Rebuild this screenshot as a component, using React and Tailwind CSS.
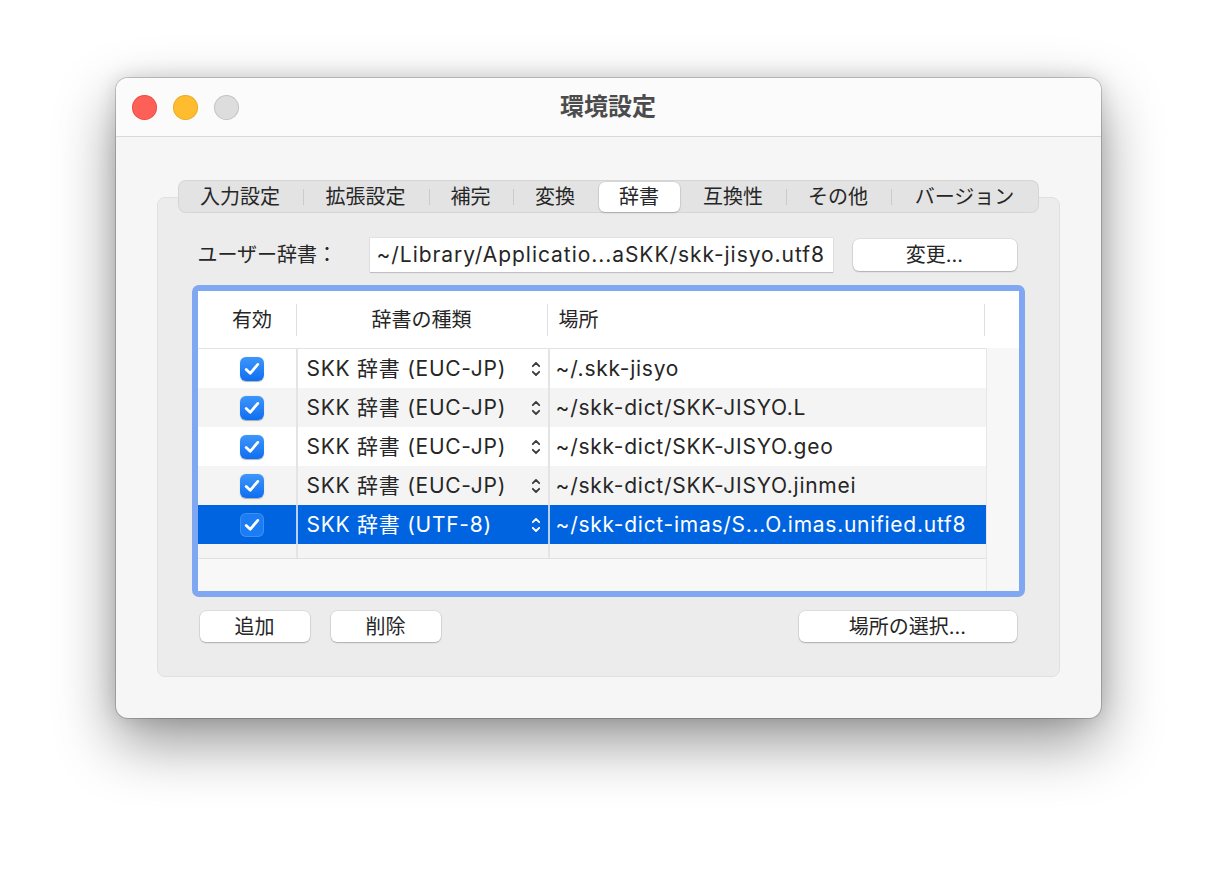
import React from 'react';

const font = { fontFamily: 'Inter, "Noto Sans CJK JP", sans-serif' };

const tabs = [
  { label: '入力設定', w: 'w-[125px]' },
  { label: '拡張設定', w: 'w-[126px]' },
  { label: '補完', w: 'w-[84px]' },
  { label: '変換', w: 'w-[85px]' },
  { label: '辞書', w: 'w-[83px]', active: true },
  { label: '互換性', w: 'w-[105px]' },
  { label: 'その他', w: 'w-[105px]' },
  { label: 'バージョン', w: 'w-[148px]' },
];

const rows = [
  { type: 'SKK 辞書 (EUC-JP)', path: '~/.skk-jisyo' },
  { type: 'SKK 辞書 (EUC-JP)', path: '~/skk-dict/SKK-JISYO.L' },
  { type: 'SKK 辞書 (EUC-JP)', path: '~/skk-dict/SKK-JISYO.geo' },
  { type: 'SKK 辞書 (EUC-JP)', path: '~/skk-dict/SKK-JISYO.jinmei' },
  { type: 'SKK 辞書 (UTF-8)', path: '~/skk-dict-imas/S...O.imas.unified.utf8', selected: true },
];

const Checkbox = ({ selected }) => (
  <div
    className={`w-[24px] h-[24px] rounded-[6px] flex items-center justify-center ${
      selected
        ? 'bg-[#1b7cf3] shadow-[inset_0_0_0_1px_rgba(255,255,255,0.15)]'
        : 'bg-gradient-to-b from-[#3d96fb] to-[#0b6ef0] shadow-[0_0.5px_1px_rgba(0,0,0,0.3)]'
    }`}
  >
    <svg width="16" height="14" viewBox="0 0 16 14" fill="none">
      <path d="M2.2 7.4 L6.2 11.3 L13.8 2.4" stroke="white" strokeWidth="2.8" strokeLinecap="round" strokeLinejoin="round" />
    </svg>
  </div>
);

const Stepper = ({ selected }) => (
  <svg width="10" height="18" viewBox="0 0 10 18" fill="none">
    <path d="M1.8 6.2 L5 3 L8.2 6.2 M1.8 11.8 L5 15 L8.2 11.8" stroke={selected ? 'white' : '#3a3a3a'} strokeWidth="1.8" strokeLinecap="round" strokeLinejoin="round" />
  </svg>
);

const Button = ({ children, className }) => (
  <button className={`h-[31px] bg-white rounded-[6px] text-[20px] text-[#262626] shadow-[0_0_0_0.5px_rgba(0,0,0,0.12),0_1px_1.5px_rgba(0,0,0,0.22)] flex items-center justify-center ${className}`}>
    {children}
  </button>
);

export default function App() {
  return (
    <div className="w-full h-[871px] bg-white flex justify-center pt-[78px]" style={font}>
      <div className="w-[985px] h-[640px] rounded-[12px] overflow-hidden bg-[#f6f6f6] shadow-[0_0_0_1px_rgba(0,0,0,0.18),0_24px_60px_rgba(0,0,0,0.42),0_0_20px_rgba(0,0,0,0.14)] flex flex-col">
        {/* title bar */}
        <div className="h-[59px] shrink-0 bg-[#fbfbfb] border-b border-[#d9d9d9] flex items-center relative">
          <div className="flex gap-[16px] pl-[16px]">
            <div className="w-[25px] h-[25px] rounded-full bg-[#fe5f57] shadow-[inset_0_0_0_1px_rgba(200,50,40,0.35)]" />
            <div className="w-[25px] h-[25px] rounded-full bg-[#febc2e] shadow-[inset_0_0_0_1px_rgba(200,140,20,0.35)]" />
            <div className="w-[25px] h-[25px] rounded-full bg-[#dddddd] shadow-[inset_0_0_0_1px_rgba(0,0,0,0.12)]" />
          </div>
          <div className="absolute inset-0 flex items-center justify-center text-[24px] font-bold text-[#4c4c4c] pointer-events-none">
            環境設定
          </div>
        </div>

        {/* content */}
        <div className="px-[41px] pt-[43px] flex flex-col items-center">
          <div className="relative z-10 h-[33px] w-[861px] rounded-[8px] bg-[#e3e3e3] shadow-[inset_0_0_0_1px_rgba(0,0,0,0.06)] flex items-center text-[20px] text-[#262626]">
            {tabs.map((t, i) => {
              const prevActive = i > 0 && tabs[i - 1].active;
              const showSep = i > 0 && !t.active && !prevActive;
              return (
                <div key={t.label} className={`${t.w} h-full relative flex items-center justify-center pt-[1px]`}>
                  {showSep && <div className="absolute left-0 top-[9px] w-px h-[16px] bg-[#cbcbcb]" />}
                  {t.active ? (
                    <div className="w-[81px] h-[30px] bg-white rounded-[6px] shadow-[0_0_0_0.5px_rgba(0,0,0,0.1),0_1px_2px_rgba(0,0,0,0.18)] flex items-center justify-center">
                      {t.label}
                    </div>
                  ) : (
                    t.label
                  )}
                </div>
              );
            })}
          </div>

          <div className="-mt-[16px] w-[903px] h-[480px] rounded-[8px] bg-[#ececec] border border-[#e0e0e0] px-[34px] pt-[40px] flex flex-col">
            {/* user dictionary */}
            <div className="h-[34px] pl-[6px] flex items-center text-[20px] text-[#262626]">
              <div className="w-[172px]">ユーザー辞書：</div>
              <div className="w-[463px] h-[34px] bg-white shadow-[0_0_0_0.5px_rgba(0,0,0,0.08),0_1px_1px_rgba(0,0,0,0.15)] flex items-center pl-[7px] whitespace-nowrap overflow-hidden text-[21px] tracking-[0.045em]">
                ~/Library/Applicatio...aSKK/skk-jisyo.utf8
              </div>
              <Button className="ml-[20px] w-[164px] h-[32px]">変更...</Button>
            </div>

            {/* table */}
            <div className="mt-[13px] h-[312px] rounded-[7px] border-[6px] border-[#80a7f1] bg-white flex flex-col overflow-hidden text-[20px] text-[#262626]">
              <div className="h-[57px] shrink-0 flex items-center bg-white">
                <div className="w-[98px] pl-[11px] text-center">有効</div>
                <div className="w-px h-[32px] bg-[#dedede]" />
                <div className="w-[250px] text-center">辞書の種類</div>
                <div className="w-px h-[32px] bg-[#dedede]" />
                <div className="w-[436px] pl-[11px]">場所</div>
                <div className="w-px h-[32px] bg-[#dedede]" />
              </div>
              <div className="flex flex-1">
                <div className="w-[789px] flex flex-col border-r border-[#e6e6e6]">
                  <div className="border-t border-[#e3e3e3]">
                    {rows.map((r, i) => (
                      <div
                        key={i}
                        className={`h-[39px] flex items-center text-[21px] tracking-[0.035em] ${
                          r.selected ? 'bg-[#0064e1] text-white' : i % 2 ? 'bg-[#f4f4f4]' : 'bg-white'
                        }`}
                      >
                        <div className="w-[98px] pl-[11px] flex justify-center">
                          <Checkbox selected={r.selected} />
                        </div>
                        <div className={`w-[2px] h-full ${r.selected ? 'bg-[#b9cff2]' : 'bg-[#e4e4e4]'}`} />
                        <div className="w-[250px] pl-[9px] pr-[7px] flex items-center justify-between whitespace-nowrap">
                          <span>{r.type}</span>
                          <Stepper selected={r.selected} />
                        </div>
                        <div className={`w-[2px] h-full ${r.selected ? 'bg-[#b9cff2]' : 'bg-[#e4e4e4]'}`} />
                        <div className="flex-1 pl-[6px] whitespace-nowrap overflow-hidden">{r.path}</div>
                      </div>
                    ))}
                    <div className="h-[15px] flex bg-[#f4f4f4] border-b border-[#e0e0e0]">
                      <div className="w-[98px]" />
                      <div className="w-[2px] h-full bg-[#e4e4e4]" />
                      <div className="w-[250px]" />
                      <div className="w-[2px] h-full bg-[#e4e4e4]" />
                    </div>
                  </div>
                  <div className="flex-1 bg-[#f8f8f8]" />
                </div>
                <div className="flex-1 bg-[#f7f7f7]" />
              </div>
            </div>

            {/* buttons */}
            <div className="mt-[14px] px-[8px] flex justify-between">
              <div className="flex gap-[21px]">
                <Button className="w-[110px]">追加</Button>
                <Button className="w-[110px]">削除</Button>
              </div>
              <Button className="w-[218px]">場所の選択...</Button>
            </div>
          </div>
        </div>
      </div>
    </div>
  );
}
